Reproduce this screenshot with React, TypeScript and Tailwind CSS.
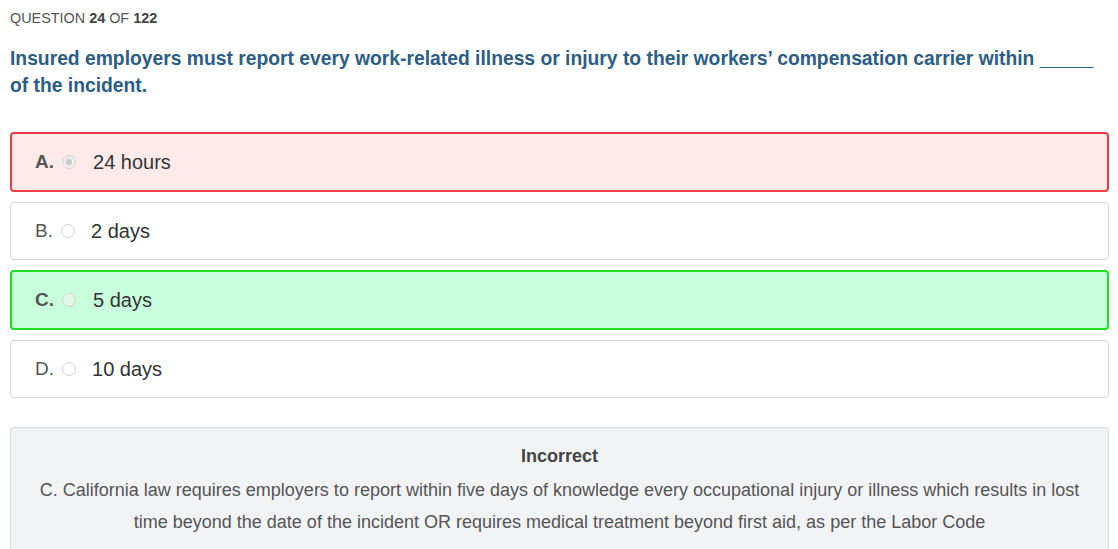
import React from "react";

interface OptionProps {
  letter: string;
  text: string;
  state?: "wrong" | "right";
  checked?: boolean;
}

function Option({ letter, text, state, checked }: OptionProps) {
  const box =
    state === "wrong"
      ? "border-2 border-[#ee3b47] bg-[#ffeaea] h-[60px] pl-[23px]"
      : state === "right"
      ? "border-2 border-[#22dd22] bg-[#c8ffdc] h-[60px] pl-[23px]"
      : "border border-[#d9d9d9] bg-white h-[58px] pl-[24px]";
  return (
    <div className={`flex items-center rounded-[4px] ${box}`}>
      <span className={`text-[19px] text-[#555] ${state ? "font-bold" : ""}`}>{letter}.</span>
      <span
        className={`ml-[8px] flex h-[14px] w-[14px] items-center justify-center rounded-full border border-[#d4d4d4] ${
          state === "right" ? "bg-[#e0f7e8]" : state === "wrong" ? "bg-[#eeeeee]" : "bg-white"
        }`}
      >
        {checked && <span className="h-[6px] w-[6px] rounded-full bg-[#c8c8c8]" />}
      </span>
      <span className={`text-[20px] text-[#333] ${state ? "ml-[17px]" : "ml-[16px]"}`}>{text}</span>
    </div>
  );
}

export default function App() {
  return (
    <div className="min-h-[549px] bg-white pl-[10px] pr-[9px] pt-[10px] font-['Liberation_Sans',Arial,sans-serif]">
      <div className="text-[14.4px] leading-[16px] text-[#555]">
        QUESTION <b className="text-[#444]">24</b> OF <b className="text-[#444]">122</b>
      </div>
      <h2 className="mt-[19px] text-[19.3px] font-bold leading-[27px] text-[#2c5d85]">
        Insured employers must report every work-related illness or injury to their workers’ compensation carrier within _____ of the incident.
      </h2>
      <div className="mt-[33px] flex flex-col gap-[10px]">
        <Option letter="A" text="24 hours" state="wrong" checked />
        <Option letter="B" text="2 days" />
        <Option letter="C" text="5 days" state="right" />
        <Option letter="D" text="10 days" />
      </div>
      <div className="mt-[29px] rounded-t-[4px] border border-b-0 border-[#dcdcdc] bg-[#f2f3f5] px-[20px] pt-[16px] pb-[20px] text-center">
        <div className="text-[18px] font-bold leading-[24px] text-[#444]">Incorrect</div>
        <p className="mt-[6px] text-[18px] leading-[32px] text-[#555]">
          C. California law requires employers to report within five days of knowledge every occupational injury or illness which results in lost time beyond the date of the incident OR requires medical treatment beyond first aid, as per the Labor Code
        </p>
      </div>
    </div>
  );
}
